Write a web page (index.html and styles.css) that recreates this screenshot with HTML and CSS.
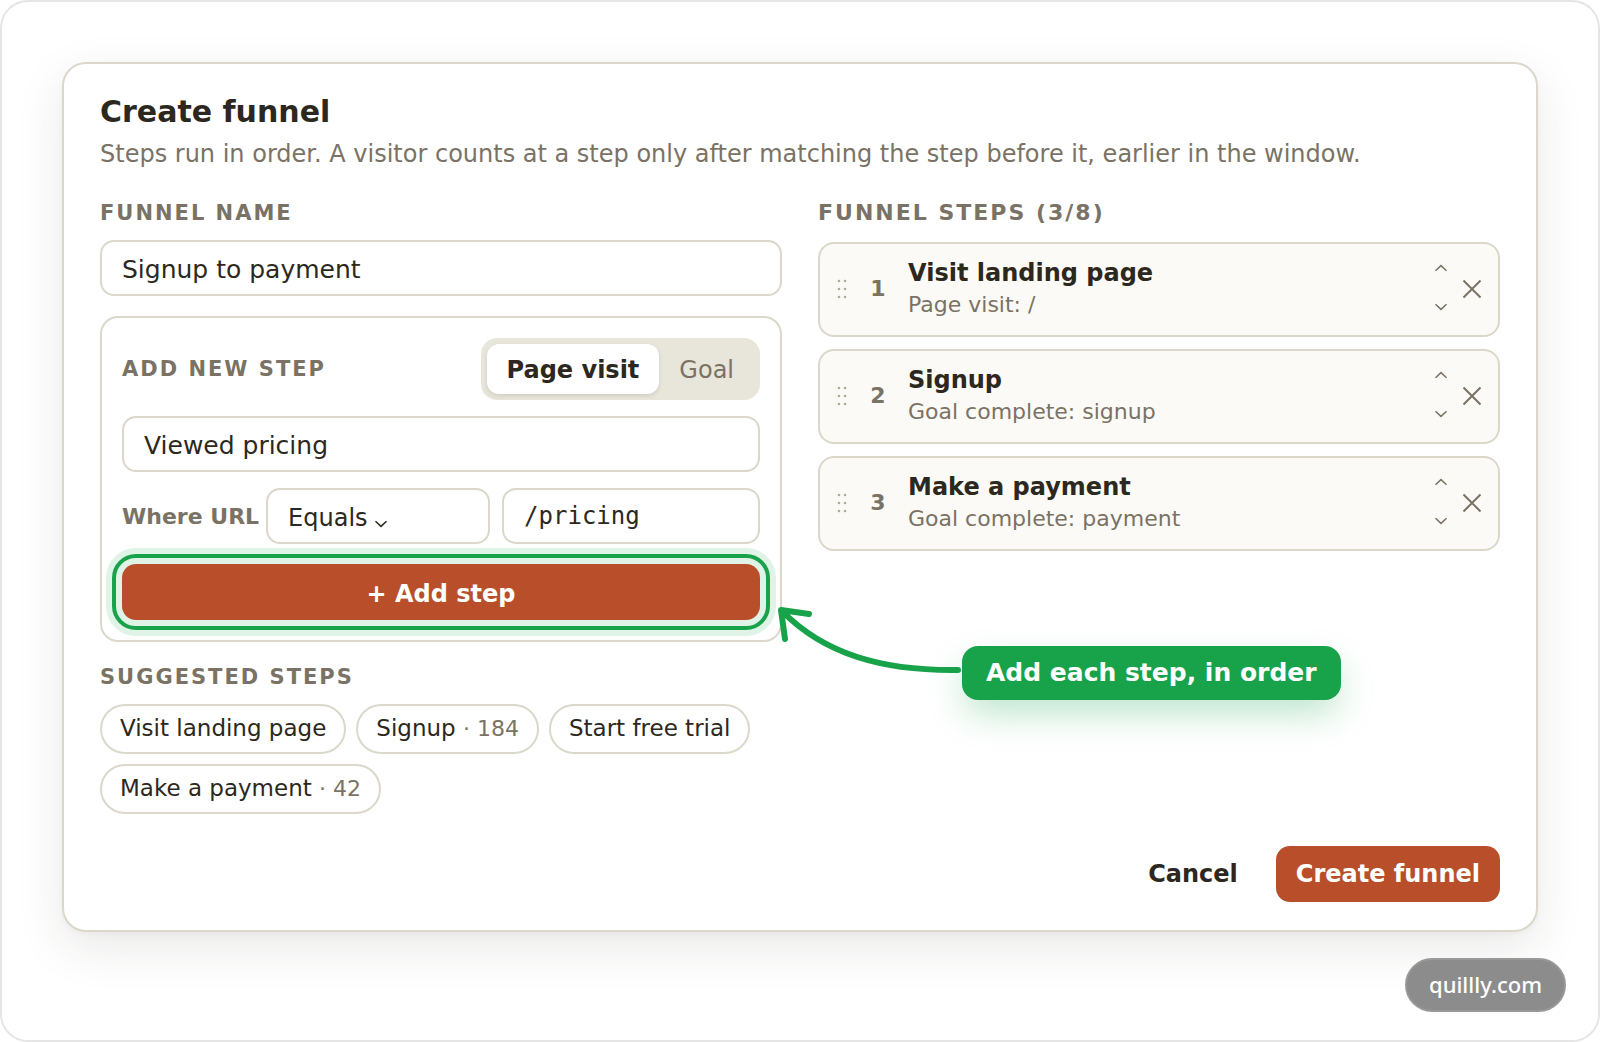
FILE: index.html
```html
<!DOCTYPE html>
<html lang="en">
<head>
    <meta charset="UTF-8">
    <meta name="viewport" content="width=device-width, initial-scale=1.0">
    <title>Create funnel</title>
    <link rel="stylesheet" href="styles.css">
</head>
<body>
    <svg class="sprite" aria-hidden="true">
        <symbol id="icon-grip" viewBox="0 0 10 20">
            <g fill="currentColor">
                <circle cx="2" cy="2" r="1.3"/><circle cx="8" cy="2" r="1.3"/>
                <circle cx="2" cy="10" r="1.3"/><circle cx="8" cy="10" r="1.3"/>
                <circle cx="2" cy="18" r="1.3"/><circle cx="8" cy="18" r="1.3"/>
            </g>
        </symbol>
        <symbol id="icon-up" viewBox="0 0 14 8">
            <path d="M1.500 6.800 7 1.600l5.500 5.200" fill="none" stroke="currentColor" stroke-width="1.5"/>
        </symbol>
        <symbol id="icon-down" viewBox="0 0 14 8">
            <path d="M1.500 1.200 7 6.400l5.500-5.200" fill="none" stroke="currentColor" stroke-width="1.5"/>
        </symbol>
        <symbol id="icon-close" viewBox="0 0 20 20">
            <path d="M1.500 1.500l17 17M18.500 1.500l-17 17" fill="none" stroke="currentColor" stroke-width="2"/>
        </symbol>
    </svg>

    <main class="frame">
        <form class="panel" onsubmit="return false">
            <h1>Create funnel</h1>
            <p class="intro">Steps run in order. A visitor counts at a step only after matching the step before it, earlier in the window.</p>

            <div class="columns">
                <section class="builder">
                    <label class="caption" for="funnel-name">Funnel name</label>
                    <input class="field" type="text" id="funnel-name" value="Signup to payment">

                    <div class="new-step">
                        <div class="new-step-head">
                            <h2 class="caption">Add new step</h2>
                            <div class="segmented">
                                <button type="button" class="active">Page visit</button>
                                <button type="button">Goal</button>
                            </div>
                        </div>
                        <input class="field" type="text" aria-label="Step name" value="Viewed pricing">
                        <div class="url-row">
                            <label for="url-match">Where URL</label>
                            <div class="select">
                                <select class="field" id="url-match">
                                    <option>Equals</option>
                                    <option>Contains</option>
                                </select>
                                <svg class="select-arrow"><use href="#icon-down"/></svg>
                            </div>
                            <input class="field mono" type="text" aria-label="URL" value="/pricing">
                        </div>
                        <div class="add-wrap">
                            <button type="button" class="primary add">+ Add step</button>
                            <div class="callout">
                                <svg class="callout-arrow" viewBox="0 0 190 74">
                                    <path d="M186 64C110 65 52 48 10 5M37 8 9 4l4 29"/>
                                </svg>
                                <span class="callout-text">Add each step, in order</span>
                            </div>
                        </div>
                    </div>

                    <h2 class="caption suggested">Suggested steps</h2>
                    <div class="chips">
                        <button type="button">Visit landing page</button>
                        <button type="button">Signup <small>· 184</small></button>
                        <button type="button">Start free trial</button>
                        <button type="button">Make a payment <small>· 42</small></button>
                    </div>
                </section>

                <section>
                    <h2 class="caption">Funnel steps (3/8)</h2>
                    <ol class="steps">
                        <li>
                            <svg class="grip"><use href="#icon-grip"/></svg>
                            <span class="num">1</span>
                            <div class="info"><strong>Visit landing page</strong><span>Page visit: /</span></div>
                            <div class="move">
                                <button type="button" aria-label="Move up"><svg><use href="#icon-up"/></svg></button>
                                <button type="button" aria-label="Move down"><svg><use href="#icon-down"/></svg></button>
                            </div>
                            <button type="button" class="remove" aria-label="Remove"><svg><use href="#icon-close"/></svg></button>
                        </li>
                        <li>
                            <svg class="grip"><use href="#icon-grip"/></svg>
                            <span class="num">2</span>
                            <div class="info"><strong>Signup</strong><span>Goal complete: signup</span></div>
                            <div class="move">
                                <button type="button" aria-label="Move up"><svg><use href="#icon-up"/></svg></button>
                                <button type="button" aria-label="Move down"><svg><use href="#icon-down"/></svg></button>
                            </div>
                            <button type="button" class="remove" aria-label="Remove"><svg><use href="#icon-close"/></svg></button>
                        </li>
                        <li>
                            <svg class="grip"><use href="#icon-grip"/></svg>
                            <span class="num">3</span>
                            <div class="info"><strong>Make a payment</strong><span>Goal complete: payment</span></div>
                            <div class="move">
                                <button type="button" aria-label="Move up"><svg><use href="#icon-up"/></svg></button>
                                <button type="button" aria-label="Move down"><svg><use href="#icon-down"/></svg></button>
                            </div>
                            <button type="button" class="remove" aria-label="Remove"><svg><use href="#icon-close"/></svg></button>
                        </li>
                    </ol>
                </section>
            </div>

            <div class="actions">
                <button type="button" class="cancel">Cancel</button>
                <button type="submit" class="primary">Create funnel</button>
            </div>
        </form>
        <span class="site">quillly.com</span>
    </main>
</body>
</html>
```
FILE: styles.css
```css
* {
    box-sizing: border-box;
}

body {
    margin: 0;
    background: #fff;
    color: #2c2820;
    font-family: "DejaVu Sans", sans-serif;
    font-size: 24px;
}

h1, h2, p, ol {
    margin: 0;
    padding: 0;
}

button, input, select {
    font: inherit;
    color: inherit;
    margin: 0;
}

button {
    border: none;
    background: none;
    padding: 0;
    cursor: pointer;
}

.sprite {
    display: none;
}

.frame {
    position: relative;
    min-height: 100vh;
    padding: 60px;
    border: 2px solid #e5e5e5;
    border-radius: 28px;
}

.panel {
    padding: 28px 36px;
    background: #fff;
    border: 2px solid #dcd7cb;
    border-radius: 24px;
    box-shadow: 0 2px 4px rgba(44, 40, 32, 0.04), 0 16px 48px rgba(44, 40, 32, 0.1);
}

h1 {
    font-size: 30px;
    line-height: 40px;
}

.intro {
    margin-top: 2px;
    color: #7a7264;
    line-height: 40px;
}

.columns {
    display: grid;
    grid-template-columns: 1fr 1fr;
    gap: 36px;
    margin-top: 24px;
}

.caption {
    display: block;
    color: #7a7264;
    font-size: 22px;
    font-weight: bold;
    line-height: 30px;
    letter-spacing: 2px;
    text-transform: uppercase;
}

.builder .caption {
    font-size: 21px;
}

.field {
    display: block;
    width: 100%;
    height: 56px;
    padding: 2px 20px 0;
    background: #fff;
    border: 2px solid #dcd7cb;
    border-radius: 14px;
    font-size: 25px;
}

.builder > .field {
    margin-top: 12px;
}

.new-step {
    display: flex;
    flex-direction: column;
    gap: 16px;
    margin-top: 20px;
    padding: 20px;
    border: 2px solid #dcd7cb;
    border-radius: 18px;
}

.new-step-head {
    display: flex;
    align-items: center;
    justify-content: space-between;
}

.segmented {
    display: flex;
    padding: 6px;
    background: #e8e5da;
    border-radius: 16px;
}

.segmented button {
    height: 50px;
    padding: 2px 20px 0;
    border-radius: 12px;
    color: #7a7264;
}

.segmented .active {
    background: #fff;
    color: #2c2820;
    font-weight: bold;
    box-shadow: 0 2px 4px rgba(44, 40, 32, 0.12);
}

.url-row {
    display: flex;
    align-items: center;
}

.url-row label {
    margin-right: 7px;
    color: #7a7264;
    font-size: 22px;
    font-weight: bold;
    white-space: nowrap;
}

.select {
    position: relative;
    flex: 0 0 224px;
    margin-right: 12px;
}

.select .field {
    appearance: none;
    padding-top: 4px;
    font-size: 24px;
}

.select-arrow {
    position: absolute;
    left: 108px;
    top: 32px;
    width: 14px;
    height: 8px;
    pointer-events: none;
}

.mono {
    min-width: 0;
    padding-top: 0;
    font-family: "DejaVu Sans Mono", monospace;
    font-size: 24px;
}

.primary {
    height: 56px;
    padding: 0 20px;
    background: #b94f2a;
    color: #fff;
    font-weight: bold;
    border-radius: 14px;
}

.add-wrap {
    position: relative;
    margin-top: 4px;
}

.add {
    display: block;
    width: 100%;
    padding-top: 4px;
    outline: 4px solid #18a34a;
    outline-offset: 6px;
    box-shadow: 0 0 0 16px #e0f3e7;
}

/* hangs off the right edge of the add button */
.callout {
    position: absolute;
    left: 100%;
    top: 42px;
    display: flex;
    align-items: flex-start;
    margin-left: 12px;
}

.callout-arrow {
    width: 190px;
    height: 74px;
    flex: none;
}

.callout-arrow path {
    fill: none;
    stroke: #18a34a;
    stroke-width: 6;
    stroke-linecap: round;
    stroke-linejoin: round;
}

.callout-text {
    margin-top: 40px;
    padding: 0 24px;
    background: #18a34a;
    color: #fff;
    font-size: 25px;
    font-weight: bold;
    line-height: 54px;
    white-space: nowrap;
    border-radius: 16px;
    box-shadow: 0 16px 36px -4px rgba(24, 163, 74, 0.3);
}

.suggested {
    margin-top: 20px;
}

.chips {
    display: flex;
    flex-wrap: wrap;
    gap: 10px;
    margin-top: 12px;
}

.chips button {
    height: 50px;
    padding: 0 18px 2px;
    border: 2px solid #dcd7cb;
    border-radius: 25px;
    font-size: 23px;
}

.chips small {
    color: #7a7264;
    font-size: 22px;
}

.steps {
    display: flex;
    flex-direction: column;
    gap: 12px;
    margin-top: 14px;
    list-style: none;
}

.steps li {
    display: flex;
    align-items: center;
    height: 95px;
    padding: 0 16px 2px 17px;
    background: #fcfaf6;
    border: 2px solid #dcd7cb;
    border-radius: 16px;
}

.grip {
    width: 10px;
    height: 20px;
    color: #b0aa9b;
}

.num {
    width: 30px;
    margin: 0 15px 0 16px;
    color: #7a7264;
    font-size: 22px;
    font-weight: bold;
    text-align: center;
}

.info {
    flex: 1;
}

.info strong, .info span {
    display: block;
    line-height: 32px;
}

.info span {
    color: #7a7264;
    font-size: 22px;
}

.move {
    display: flex;
    flex-direction: column;
    gap: 31px;
    margin: 0 14px 3px 0;
}

.move button, .move svg, .remove, .remove svg {
    display: block;
    color: #7a7264;
}

.move svg {
    width: 14px;
    height: 8px;
}

.remove svg {
    width: 20px;
    height: 20px;
}

.actions {
    display: flex;
    justify-content: flex-end;
    margin-top: 32px;
}

.cancel {
    padding: 0 38px;
    font-weight: bold;
}

.site {
    position: absolute;
    right: 32px;
    bottom: 28px;
    padding: 0 22px 2px;
    background: #8c8c8c;
    border: 2px solid #999;
    border-radius: 27px;
    color: #fff;
    font-family: "Noto Sans", sans-serif;
    font-size: 22px;
    font-weight: 500;
    line-height: 48px;
}
```
